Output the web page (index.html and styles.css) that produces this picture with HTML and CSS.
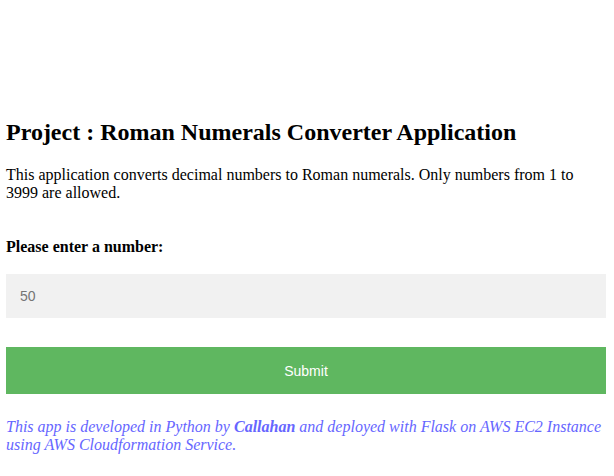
FILE: index.html
```html
<!DOCTYPE html>
<html>
<head>
<meta charset="utf-8">
<link rel="stylesheet" href="styles.css">
</head>
<body>
<div class="page">
  <h2 class="title">Project : Roman Numerals Converter Application</h2>
  <p class="intro">This application converts decimal numbers to Roman numerals. Only numbers from 1 to 3999 are allowed.</p>
  <form class="form">
    <label class="label" for="number">Please enter a number:</label>
    <input class="field" id="number" type="text" placeholder="50">
    <button class="submit" type="button">Submit</button>
  </form>
  <p class="footer">This app is developed in Python by <b>Callahan</b> and deployed with Flask on AWS EC2 Instance using AWS Cloudformation Service.</p>
</div>
</body>
</html>
```
FILE: styles.css
```css
html, body {
  margin: 0;
  padding: 0;
  background: #fff;
}
body {
  font-family: "Liberation Serif", "Times New Roman", serif;
  font-size: 16px;
  color: #000;
}
.page {
  width: 600px;
  margin-left: 6px;
  padding-top: 98px;
}
.title {
  font-size: 24px;
  font-weight: bold;
  margin: 20px 0 20px;
  line-height: 28px;
}
.intro {
  margin: 0 0 16px;
  line-height: 18px;
}
.form {
  display: flex;
  flex-direction: column;
}
.label {
  font-weight: bold;
  margin-top: 20px;
  line-height: 18px;
}
.field {
  margin-top: 18px;
  height: 44px;
  box-sizing: border-box;
  border: none;
  background: #f1f1f1;
  padding: 0 14px;
  font-family: "Liberation Sans", Arial, sans-serif;
  font-size: 14px;
  outline: none;
}
.field::placeholder {
  color: #757575;
}
.submit {
  margin-top: 29px;
  height: 47px;
  border: none;
  background: #5fb760;
  color: #fff;
  font-family: "Liberation Sans", Arial, sans-serif;
  font-size: 14px;
}
.footer {
  margin: 24px 0 0;
  font-style: italic;
  color: #6666ff;
  line-height: 18px;
}
```
